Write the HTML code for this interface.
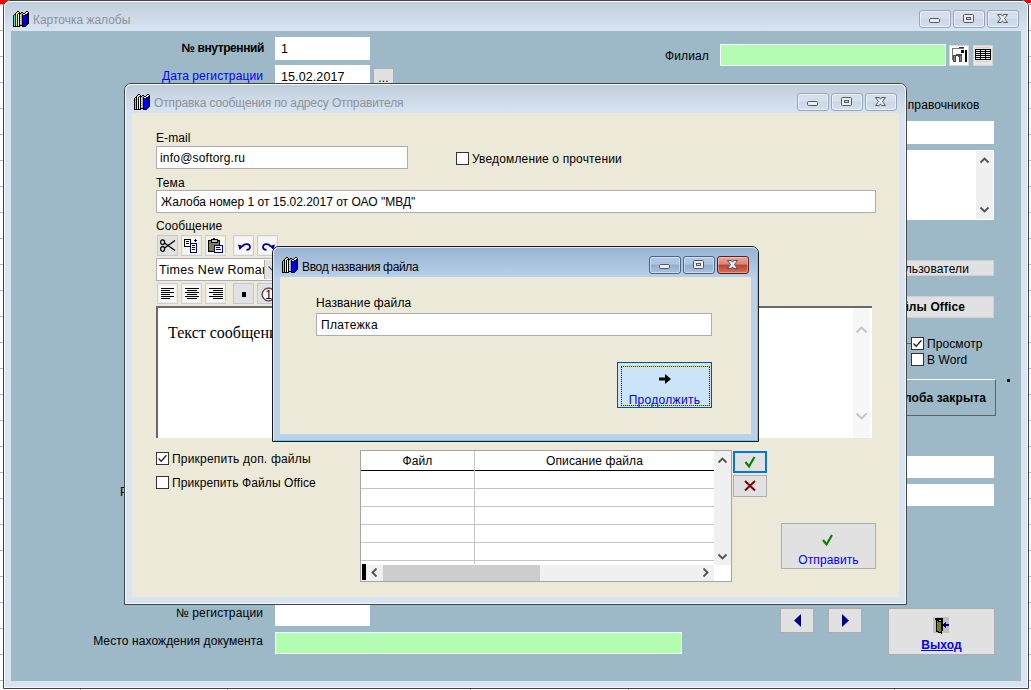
<!DOCTYPE html>
<html lang="ru">
<head>
<meta charset="utf-8">
<title>Карточка жалобы</title>
<style>
html,body{margin:0;padding:0;}
body{width:1031px;height:690px;overflow:hidden;position:relative;background:#fff;
 font-family:"Liberation Sans",sans-serif;font-size:12px;color:#000;line-height:14px;letter-spacing:0.1px;}
.a{position:absolute;box-sizing:border-box;white-space:nowrap;}
.win{position:absolute;box-sizing:border-box;border:1px solid #444;border-radius:7px 7px 0 0;}
.win.inact{background:#d8e4f1;}
.win.act{background:#b9d1ea;border-color:#1a1a1a;}
.win.act .hl{border-color:rgba(255,255,255,.55) #62ccf5 #62ccf5 rgba(255,255,255,.55);}
.win .hl{position:absolute;left:0;top:0;right:0;bottom:0;border:1px solid rgba(255,255,255,.75);border-radius:6px 6px 0 0;}
.tbar{position:absolute;left:1px;right:1px;top:1px;height:28px;border-radius:5px 5px 0 0;}
.inact .tbar{background:linear-gradient(#c0cedc,#d8e4f1);}
.act .tbar{background:linear-gradient(#98b3d2,#b9d1ea);}
.ttl{position:absolute;letter-spacing:-0.12px;font-size:12px;line-height:16px;white-space:nowrap;}
.inact .ttl{color:#8f9297;}
.act .ttl{color:#000;}
.cb{position:absolute;box-sizing:border-box;width:32px;height:18px;border:1px solid #98a6bb;border-radius:3px;
 background:linear-gradient(#d3deeb 0,#d6e1ee 45%,#c8d6e6 50%,#d3e0ee 100%);box-shadow:inset 0 0 0 1px rgba(255,255,255,.55);}
.act .cb{border-color:#4d6288;background:linear-gradient(#b3c9e3 0,#adc4df 45%,#92afd1 50%,#a9c2de 100%);box-shadow:inset 0 0 0 1px rgba(255,255,255,.45);}
.act .cb.x{border-color:#5b2019;background:linear-gradient(#e6a69c 0,#d98475 45%,#c1402b 50%,#d2735f 100%);box-shadow:inset 0 0 0 1px rgba(255,255,255,.35);}
.cb svg{position:absolute;left:-1px;top:-1px;}
.client{position:absolute;box-sizing:border-box;}
.lbl{position:absolute;white-space:nowrap;font-size:12px;line-height:14px;}
.r{text-align:right;}
.b{font-weight:bold;}
.blue{color:#0000ff;}
.inp{position:absolute;box-sizing:border-box;background:#fff;border:1px solid #fff;white-space:nowrap;overflow:hidden;}
.inp.g{background:#b3fdb3;border-color:#fbfffb;}
.inp.d{border-color:#abadb3;}
.btn{position:absolute;box-sizing:border-box;background:#e1e1e1;border:1px solid #adadad;text-align:center;white-space:nowrap;overflow:hidden;}
.chk{position:absolute;box-sizing:border-box;width:13px;height:13px;background:#fff;border:1px solid #333;}
.tb{position:absolute;box-sizing:border-box;width:21px;height:21px;background:#f6f6f6;border:1px solid #cfcfcf;box-shadow:inset 0 0 0 1px #ececec;}
.tb.gr{background:#e1e1e1;border-color:#c8c8c8;box-shadow:none;}
.tb svg{position:absolute;left:1px;top:1px;}
svg{display:block;}
</style>
</head>
<body>
<!-- desktop/sheet behind -->
<div class="a" id="bg" style="left:0;top:0;width:1031px;height:690px;background:#fff linear-gradient(to bottom,transparent 25px,#b4b4b4 25px) 0 5px/100% 26px;"></div>
<div class="a" style="left:0;top:0;width:8px;height:4px;background:#f00;"></div>
<div class="a" style="left:1024px;top:0;width:7px;height:3px;background:#f00;"></div>

<div class="a" style="left:80px;top:689px;width:1px;height:1px;background:#888;"></div><div class="a" style="left:227px;top:689px;width:1px;height:1px;background:#888;"></div><div class="a" style="left:470px;top:689px;width:1px;height:1px;background:#888;"></div><div class="a" style="left:628px;top:689px;width:1px;height:1px;background:#888;"></div><div class="a" style="left:894px;top:689px;width:1px;height:1px;background:#888;"></div>
<!-- MAIN WINDOW -->
<div class="win inact" id="w1" style="left:3px;top:0;width:1026px;height:689px;">
 <div class="tbar" style="height:29px;"></div><div class="hl"></div>
 <svg class="a" style="left:9px;top:10px;" width="16" height="16" viewBox="0 0 16 16" shape-rendering="crispEdges"><path d="M0 4v12h1v-12zM1 3v1h1v-1zM1 15v1h1v-1zM2 2v14h1v-14zM3 1v1h1v-1zM3 15v1h1v-1zM4 0v1h1v-1zM4 3v13h1v-13zM5 0v1h1v-1zM5 2v1h1v-1zM5 15v1h1v-1zM6 1v15h1v-15zM7 2v1h1v-1zM7 14v1h1v-1zM8 1v1h1v-1zM8 14v1h1v-1zM9 1v1h1v-1zM9 3v13h1v-13zM10 2v1h1v-1zM10 15v1h1v-1zM11 2v1h1v-1zM11 15v1h1v-1zM12 1v1h1v-1zM12 3v2h1v-2zM12 15v1h1v-1zM13 0v1h1v-1zM13 14v1h1v-1zM14 0v1h1v-1zM14 2v1h1v-1zM14 13v1h1v-1zM15 1v12h1v-12z" fill="#000"/><path d="M1 4v11h1v-11z" fill="#00ffff"/><path d="M3 2v13h1v-13zM4 1v2h1v-2zM5 1v1h1v-1z" fill="#ffff00"/><path d="M5 3v12h1v-12zM7 4v1h1v-1zM7 6v1h1v-1zM7 8v1h1v-1zM7 10v1h1v-1zM7 12v1h1v-1zM10 3v1h1v-1zM11 3v1h1v-1zM12 2v1h1v-1zM13 1v2h1v-2zM14 1v1h1v-1z" fill="#fff"/><path d="M7 3v1h1v-1zM7 5v1h1v-1zM7 7v1h1v-1zM7 9v1h1v-1zM7 11v1h1v-1zM7 13v1h1v-1zM8 2v12h1v-12zM9 2v1h1v-1z" fill="#a8a8a8"/><path d="M10 4v11h1v-11zM11 4v11h1v-11zM12 5v10h1v-10z" fill="#0000ff"/><path d="M13 3v11h1v-11zM14 3v10h1v-10z" fill="#0000a0"/></svg>
 <div class="ttl" style="left:29px;top:11px;letter-spacing:-0.02px;">Карточка жалобы</div>
 <div class="cb" style="left:915px;top:9px;"><svg width="32" height="18" viewBox="0 0 32 18"><rect x="10.5" y="8.5" width="10" height="4" rx="1.2" fill="#eeedec" stroke="#4f596a"/></svg></div>
 <div class="cb" style="left:949px;top:9px;"><svg width="32" height="18" viewBox="0 0 32 18"><rect x="10.5" y="4.500" width="10" height="8" rx="1.2" fill="#eeedec" stroke="#4f596a"/><rect x="13.500" y="7.500" width="4" height="2" fill="#c9d6e6" stroke="#4f596a"/></svg></div>
 <div class="cb x" style="left:983px;top:9px;"><svg width="32" height="18" viewBox="0 0 32 18"><path d="M10.500 4.500h3.900l1.100 1.700 1.100-1.700h3.900l-3 4 3 4h-3.900l-1.100-1.700-1.100 1.700h-3.900l3-4z" fill="#eeedec" stroke="#4f596a" stroke-width="1" stroke-linejoin="round"/></svg></div>
</div>
<div class="client" id="c1" style="left:11px;top:31px;width:1010px;height:650px;background:#9db8c6;"></div>


<!-- main window contents -->
<div id="m" class="a" style="left:0;top:0;width:1031px;height:690px;">
 <div class="lbl b r" style="left:100px;width:164px;top:41px;letter-spacing:-0.4px;">№ внутренний</div>
 <div class="inp" style="left:275px;top:37px;width:95px;height:23px;font-size:12.5px;line-height:23px;padding-left:5px;">1</div>
 <div class="lbl blue r" style="left:100px;width:163px;top:69px;letter-spacing:0.1px;">Дата регистрации</div>
 <div class="inp" style="left:275px;top:65px;width:95px;height:23px;font-size:12.5px;line-height:23px;padding-left:5px;">15.02.2017</div>
 <div class="btn" style="left:373px;top:68px;width:21px;height:22px;line-height:18px;">...</div>
 <div class="lbl" style="left:665px;top:49px;">Филиал</div>
 <div class="inp g" style="left:720px;top:44px;width:226px;height:22px;"></div>
 <div class="btn" style="left:949px;top:45px;width:20px;height:21px;background:#fff;border-color:#ddd6d6;">
  <svg width="18" height="19" viewBox="0 0 18 19" shape-rendering="crispEdges"><path d="M2 2h12v1H3v11H2z" fill="#777"/><path d="M9 1h5v1H9z" fill="#333"/><rect x="11" y="4" width="3" height="3" fill="#000"/><rect x="15" y="4" width="2" height="12" fill="#000"/><path d="M3 9h3v-1h6v8h-3v-5h-1v-1h-2v6H3z" fill="#4a4a4a"/><path d="M4 10h1v5H4zM10 10h1v5h-1z" fill="#8a8a8a"/></svg></div>
 <div class="btn" style="left:973px;top:45px;width:20px;height:21px;background:#e6e6e6;border-color:#d8d2d2;">
  <svg width="18" height="19" viewBox="0 0 18 19" shape-rendering="crispEdges"><rect x="1" y="3" width="16" height="11" fill="#000"/><path d="M2 4h4v1h-4zM7 4h4v1h-4zM12 4h4v1h-4zM2 6h4v1h-4zM7 6h4v1h-4zM12 6h4v1h-4zM2 8h4v1h-4zM7 8h4v1h-4zM12 8h4v1h-4zM2 10h4v1h-4zM7 10h4v1h-4zM12 10h4v1h-4zM2 12h4v1h-4zM7 12h4v1h-4zM12 12h4v1h-4z" fill="#f0f0f0"/><path d="M2 1h14v1H2zM2 15h14v1H2z" fill="#d4d4d4"/></svg></div>
 <div class="lbl" style="left:899px;top:98px;">Справочников</div>
 <div class="inp" style="left:860px;top:121px;width:134px;height:23px;"></div>
 <div class="inp" style="left:860px;top:150px;width:134px;height:70px;">
  <div class="a" style="right:0;top:0;width:17px;height:68px;background:#f0f0f0;">
   <svg width="17" height="68" viewBox="0 0 17 68"><path d="M4.500 11.500l4-4 4 4M4.500 56.500l4 4 4-4" fill="none" stroke="#505050" stroke-width="1.8"/></svg></div></div>
 <div class="btn" style="left:860px;top:260px;width:134px;height:16px;line-height:16px;text-align:right;padding-right:24px;border-color:#d0d0d0;">Пользователи</div>
 <div class="btn b" style="left:860px;top:296px;width:134px;height:22px;line-height:21px;text-align:right;padding-right:28px;border-color:#d0d0d0;">Файлы Office</div>
 <div class="a" style="left:905px;top:343px;width:6px;height:1px;background:#5a6a72;"></div>
 <div class="chk" style="left:911px;top:337px;"></div>
 <svg class="a" style="left:911px;top:337px;" width="13" height="13" viewBox="0 0 13 13"><path d="M2.5 6.5l2.7 2.8 5.2-6" fill="none" stroke="#222" stroke-width="1.3"/></svg>
 <div class="lbl" style="left:927px;top:337px;">Просмотр</div>
 <div class="chk" style="left:911px;top:353px;"></div>
 <div class="lbl" style="left:927px;top:353px;">В Word</div>
 <div class="a b" style="left:860px;top:379px;width:136px;height:37px;border:1px solid;border-color:#fff #5c6366 #5c6366 #fff;line-height:37px;text-align:right;padding-right:9px;">Жалоба закрыта</div>
 <div class="a" style="left:1007px;top:379px;width:3px;height:3px;background:#000;"></div>
 <div class="lbl" style="left:120px;top:485px;">Р</div>
 <div class="inp" style="left:860px;top:456px;width:134px;height:22px;"></div>
 <div class="inp" style="left:860px;top:484px;width:134px;height:22px;"></div>
 <div class="lbl r" style="left:100px;width:163px;top:606px;">№ регистрации</div>
 <div class="inp" style="left:275px;top:603px;width:95px;height:23px;"></div>
 <div class="lbl r" style="left:60px;width:203px;top:634px;">Место нахождения документа</div>
 <div class="inp g" style="left:275px;top:632px;width:407px;height:22px;"></div>
 <div class="btn" style="left:780px;top:608px;width:34px;height:25px;"><svg width="32" height="23" viewBox="0 0 32 23"><path d="M20 5v13l-7-6.5z" fill="#000080"/></svg></div>
 <div class="btn" style="left:828px;top:608px;width:34px;height:25px;"><svg width="32" height="23" viewBox="0 0 32 23"><path d="M13 5v13l7-6.5z" fill="#000080"/></svg></div>
 <div class="btn" style="left:888px;top:608px;width:107px;height:47px;">
  <svg class="a" style="left:44px;top:8px;" width="17" height="17" viewBox="0 0 17 17" shape-rendering="crispEdges"><rect x="0" y="0" width="16" height="16" fill="#c0c0c0"/><path d="M2 1h8v13H8V3H2z" fill="#000"/><path d="M3 3l5 2v11l-5-2z" fill="#808000"/><path d="M3 3l5 2v11l-5-2z" fill="none" stroke="#000" stroke-width="1"/><path d="M10 7h2V5l0 0h1v2h3v2h-3v2h-1V9h-2z" fill="#000080"/><path d="M9 8l3-3v6z" fill="#000080"/></svg>
  <div class="a b blue" style="left:0;right:0;top:29px;text-align:center;font-size:12px;text-decoration:underline;">Выход</div></div>
</div>

<!-- MIDDLE DIALOG -->
<div class="win inact" id="w2" style="left:124px;top:83px;width:783px;height:522px;">
 <div class="tbar"></div><div class="hl"></div>
 <svg class="a" style="left:9px;top:10px;" width="16" height="16" viewBox="0 0 16 16" shape-rendering="crispEdges"><path d="M0 4v12h1v-12zM1 3v1h1v-1zM1 15v1h1v-1zM2 2v14h1v-14zM3 1v1h1v-1zM3 15v1h1v-1zM4 0v1h1v-1zM4 3v13h1v-13zM5 0v1h1v-1zM5 2v1h1v-1zM5 15v1h1v-1zM6 1v15h1v-15zM7 2v1h1v-1zM7 14v1h1v-1zM8 1v1h1v-1zM8 14v1h1v-1zM9 1v1h1v-1zM9 3v13h1v-13zM10 2v1h1v-1zM10 15v1h1v-1zM11 2v1h1v-1zM11 15v1h1v-1zM12 1v1h1v-1zM12 3v2h1v-2zM12 15v1h1v-1zM13 0v1h1v-1zM13 14v1h1v-1zM14 0v1h1v-1zM14 2v1h1v-1zM14 13v1h1v-1zM15 1v12h1v-12z" fill="#000"/><path d="M1 4v11h1v-11z" fill="#00ffff"/><path d="M3 2v13h1v-13zM4 1v2h1v-2zM5 1v1h1v-1z" fill="#ffff00"/><path d="M5 3v12h1v-12zM7 4v1h1v-1zM7 6v1h1v-1zM7 8v1h1v-1zM7 10v1h1v-1zM7 12v1h1v-1zM10 3v1h1v-1zM11 3v1h1v-1zM12 2v1h1v-1zM13 1v2h1v-2zM14 1v1h1v-1z" fill="#fff"/><path d="M7 3v1h1v-1zM7 5v1h1v-1zM7 7v1h1v-1zM7 9v1h1v-1zM7 11v1h1v-1zM7 13v1h1v-1zM8 2v12h1v-12zM9 2v1h1v-1z" fill="#a8a8a8"/><path d="M10 4v11h1v-11zM11 4v11h1v-11zM12 5v10h1v-10z" fill="#0000ff"/><path d="M13 3v11h1v-11zM14 3v10h1v-10z" fill="#0000a0"/></svg>
 <div class="ttl" style="left:29px;top:11px;">Отправка сообщения по адресу Отправителя</div>
 <div class="cb" style="left:672px;top:9px;"><svg width="32" height="18" viewBox="0 0 32 18"><rect x="10.5" y="8.5" width="10" height="4" rx="1.2" fill="#eeedec" stroke="#4f596a"/></svg></div>
 <div class="cb" style="left:706px;top:9px;"><svg width="32" height="18" viewBox="0 0 32 18"><rect x="10.5" y="4.500" width="10" height="8" rx="1.2" fill="#eeedec" stroke="#4f596a"/><rect x="13.500" y="7.500" width="4" height="2" fill="#c9d6e6" stroke="#4f596a"/></svg></div>
 <div class="cb x" style="left:740px;top:9px;"><svg width="32" height="18" viewBox="0 0 32 18"><path d="M10.500 4.500h3.900l1.100 1.700 1.100-1.700h3.900l-3 4 3 4h-3.900l-1.100-1.700-1.100 1.700h-3.900l3-4z" fill="#eeedec" stroke="#4f596a" stroke-width="1" stroke-linejoin="round"/></svg></div>
</div>
<div class="client" id="c2" style="left:132px;top:113px;width:767px;height:484px;background:#ece9d8;"></div>


<!-- middle dialog contents -->
<div id="d" class="a" style="left:0;top:0;width:1031px;height:690px;">
 <div class="lbl" style="left:156px;top:131px;">E-mail</div>
 <div class="inp d" style="left:156px;top:146px;width:252px;height:23px;line-height:23px;padding-left:3px;letter-spacing:0.2px;">info@softorg.ru</div>
 <div class="chk" style="left:456px;top:152px;"></div>
 <div class="lbl" style="left:472px;top:152px;letter-spacing:0.15px;">Уведомление о прочтении</div>
 <div class="lbl" style="left:156px;top:176px;">Тема</div>
 <div class="inp d" style="left:156px;top:190px;width:720px;height:23px;line-height:23px;padding-left:4px;letter-spacing:0;">Жалоба номер 1 от 15.02.2017 от ОАО "МВД"</div>
 <div class="lbl" style="left:156px;top:219px;">Сообщение</div>
 <!-- toolbar row 1 -->
 <div class="tb gr" style="left:157px;top:235px;"><svg width="18" height="18" viewBox="0 0 18 18"><path d="M16 3.5L5.5 11M16 13.5L5.5 6" stroke="#000" stroke-width="1.3" fill="none"/><ellipse cx="3.6" cy="5.2" rx="2" ry="2.4" fill="none" stroke="#000" stroke-width="1.2"/><ellipse cx="3.6" cy="12" rx="2" ry="2.4" fill="none" stroke="#000" stroke-width="1.2"/></svg></div>
 <div class="tb" style="left:181px;top:235px;"><svg width="18" height="18" viewBox="0 0 18 18" shape-rendering="crispEdges"><path d="M1.5 2.5h6v7h-6z" fill="#fff" stroke="#000"/><path d="M3 4h3v1H3zM3 6h3v1H3z" fill="#000"/><path d="M7.500 6.500h6v9h-6z" fill="#fff" stroke="#000080"/><path d="M9 8h3v1H9zM9 10h3v1H9zM9 12h3v1H9z" fill="#000080"/><path d="M12 2h1v3h-1zM11 3h3v1h-3z" fill="#000"/></svg></div>
 <div class="tb" style="left:205px;top:235px;"><svg width="18" height="18" viewBox="0 0 18 18" shape-rendering="crispEdges"><path d="M1.500 3.500h11v11h-11z" fill="#808040" stroke="#000"/><path d="M4 2h6v3H4z" fill="#c0c0c0" stroke="#000"/><path d="M6 1h2v1H6z" fill="#000"/><path d="M7.500 8.500h8v7h-8z" fill="#fff" stroke="#000080"/><path d="M9 10h4v1H9zM9 12h5v1H9z" fill="#000080"/></svg></div>
 <div class="tb" style="left:233px;top:235px;"><svg width="18" height="18" viewBox="0 0 18 18"><path d="M7.500 9.500C9 6.300 15 6.300 15 10C15 12 13.500 12.800 11.500 12.800" fill="none" stroke="#000090" stroke-width="1.700"/><path d="M3 7.500l5.500 1.500-4 4z" fill="#000090"/></svg></div>
 <div class="tb" style="left:257px;top:235px;"><svg width="18" height="18" viewBox="0 0 18 18"><path d="M11.500 9.500C10 6.300 4 6.300 4 10C4 12 5.500 12.800 7.500 12.800" fill="none" stroke="#000090" stroke-width="1.700"/><path d="M16 7.500l-5.500 1.500 4 4z" fill="#000090"/></svg></div>
 <!-- font combo -->
 <div class="inp d" style="left:156px;top:258px;width:131px;height:23px;line-height:23px;padding-left:2px;font-size:12.5px;letter-spacing:0.3px;">Times New Roman</div>
 <div class="a" style="left:264px;top:260px;width:22px;height:19px;background:#e1e1e1;border-left:1px solid #adadad;"><svg width="20" height="19" viewBox="0 0 20 19"><path d="M3.500 6.500l4 4 4-4" fill="none" stroke="#555" stroke-width="1.1"/></svg></div>
 <!-- toolbar row 2 -->
 <div class="tb" style="left:157px;top:283px;"><svg width="18" height="18" viewBox="0 0 18 18" shape-rendering="crispEdges"><path d="M2 3h13v1H2zM2 5h9v1H2zM2 7h13v1H2zM2 9h9v1H2zM2 11h13v1H2zM2 13h9v1H2z" fill="#000"/></svg></div>
 <div class="tb" style="left:181px;top:283px;"><svg width="18" height="18" viewBox="0 0 18 18" shape-rendering="crispEdges"><path d="M2 3h14v1H2zM4 5h10v1H4zM2 7h14v1H2zM4 9h10v1H4zM2 11h14v1H2zM4 13h10v1H4z" fill="#000"/></svg></div>
 <div class="tb" style="left:205px;top:283px;"><svg width="18" height="18" viewBox="0 0 18 18" shape-rendering="crispEdges"><path d="M2 3h14v1H2zM6 5h10v1H6zM2 7h14v1H2zM6 9h10v1H6zM2 11h14v1H2zM6 13h10v1H6z" fill="#000"/></svg></div>
 <div class="tb gr" style="left:233px;top:283px;"><svg width="18" height="18" viewBox="0 0 18 18" shape-rendering="crispEdges"><rect x="7" y="7" width="4" height="5" fill="#000"/></svg></div>
 <div class="tb gr" style="left:257px;top:283px;"><svg width="18" height="18" viewBox="0 0 18 18"><circle cx="9.500" cy="9.500" r="6" fill="#fff" stroke="#b06000" stroke-width="1"/><circle cx="9.500" cy="9.500" r="6.600" fill="none" stroke="#000060" stroke-width=".7"/><text x="6.300" y="14" font-family="Liberation Sans,sans-serif" font-size="12" fill="#000">1</text></svg></div>
 <!-- message area -->
 <div class="a" style="left:156px;top:306px;width:716px;height:132px;background:#fff;border-top:2px solid #696969;border-left:2px solid #696969;"></div>
 <div class="a" style="left:168px;top:324px;font-family:'Liberation Serif',serif;font-size:16px;line-height:18px;letter-spacing:0;">Текст сообщения</div>
 <div class="a" style="left:853px;top:308px;width:17px;height:130px;background:#f7f7f7;"><svg width="17" height="130" viewBox="0 0 17 130"><path d="M3.500 24.500l5-5 5 5M3.500 105.500l5 5 5-5" fill="none" stroke="#c4c4c4" stroke-width="1.8"/></svg></div>
 <!-- attach -->
 <div class="chk" style="left:156px;top:452px;"></div>
 <svg class="a" style="left:156px;top:452px;" width="13" height="13" viewBox="0 0 13 13"><path d="M2.500 6.500l2.700 2.800 5.200-6" fill="none" stroke="#222" stroke-width="1.300"/></svg>
 <div class="lbl" style="left:172px;top:452px;letter-spacing:0.2px;">Прикрепить доп. файлы</div>
 <div class="chk" style="left:156px;top:476px;"></div>
 <div class="lbl" style="left:172px;top:476px;letter-spacing:0.1px;">Прикрепить Файлы Office</div>
 <!-- grid -->
 <div class="a" id="grid" style="left:360px;top:450px;width:372px;height:132px;background:#fff;border:1px solid #a3a3ab;">
  <div class="a" style="left:0;top:19px;width:353px;height:1px;background:#000;"></div>
  <div class="a" style="left:0;width:113px;top:3px;text-align:center;">Файл</div>
  <div class="a" style="left:114px;width:239px;top:3px;text-align:center;">Описание файла</div>
  <div class="a" style="left:113px;top:0;width:1px;height:113px;background:#c4c4c4;"></div>
  <div class="a" style="left:0;top:37px;width:353px;height:1px;background:#c4c4c4;"></div>
  <div class="a" style="left:0;top:55px;width:353px;height:1px;background:#c4c4c4;"></div>
  <div class="a" style="left:0;top:73px;width:353px;height:1px;background:#c4c4c4;"></div>
  <div class="a" style="left:0;top:91px;width:353px;height:1px;background:#c4c4c4;"></div>
  <div class="a" style="left:0;top:109px;width:353px;height:1px;background:#c4c4c4;"></div>
  <div class="a" style="left:353px;top:0;width:17px;height:114px;background:#f0f0f0;"><svg width="17" height="114" viewBox="0 0 17 114"><path d="M4.500 11.500l4-4 4 4M4.500 103.500l4 4 4-4" fill="none" stroke="#505050" stroke-width="1.800"/></svg></div>
  <div class="a" style="left:0;top:114px;width:353px;height:16px;background:#f0f0f0;"><svg width="353" height="17" viewBox="0 0 353 17" style="margin-top:-1px"><rect x="1" y="0" width="4" height="16" fill="#000"/><rect x="22" y="1" width="157" height="16" fill="#cdcdcd"/><path d="M15.500 4.500l-4 4 4 4M342.500 4.500l4 4-4 4" fill="none" stroke="#505050" stroke-width="1.800"/></svg></div>
 </div>
 <div class="btn" style="left:733px;top:451px;width:34px;height:22px;border:2px solid #0078d7;"><svg width="30" height="18" viewBox="0 0 30 18"><path d="M10.500 9l3.500 4.500 5.500-9.500" fill="none" stroke="#008000" stroke-width="2.100"/></svg></div>
 <div class="btn" style="left:733px;top:475px;width:34px;height:22px;"><svg width="32" height="20" viewBox="0 0 32 20"><path d="M11 5l10 9.500M21 5l-10 9.500" fill="none" stroke="#800000" stroke-width="2"/></svg></div>
 <div class="btn" style="left:781px;top:523px;width:95px;height:46px;">
  <svg class="a" style="left:38px;top:9px;" width="16" height="14" viewBox="0 0 16 14"><path d="M3 7l3.500 4.500 5.500-9.500" fill="none" stroke="#008000" stroke-width="2.100"/></svg>
  <div class="a blue" style="left:0;right:0;top:29px;text-align:center;">Отправить</div></div>
</div>

<!-- INNER DIALOG -->
<div class="win act" id="w3" style="left:272px;top:246px;width:487px;height:196px;">
 <div class="tbar" style="height:30px;"></div><div class="hl"></div>
 <svg class="a" style="left:9px;top:10px;" width="16" height="16" viewBox="0 0 16 16" shape-rendering="crispEdges"><path d="M0 4v12h1v-12zM1 3v1h1v-1zM1 15v1h1v-1zM2 2v14h1v-14zM3 1v1h1v-1zM3 15v1h1v-1zM4 0v1h1v-1zM4 3v13h1v-13zM5 0v1h1v-1zM5 2v1h1v-1zM5 15v1h1v-1zM6 1v15h1v-15zM7 2v1h1v-1zM7 14v1h1v-1zM8 1v1h1v-1zM8 14v1h1v-1zM9 1v1h1v-1zM9 3v13h1v-13zM10 2v1h1v-1zM10 15v1h1v-1zM11 2v1h1v-1zM11 15v1h1v-1zM12 1v1h1v-1zM12 3v2h1v-2zM12 15v1h1v-1zM13 0v1h1v-1zM13 14v1h1v-1zM14 0v1h1v-1zM14 2v1h1v-1zM14 13v1h1v-1zM15 1v12h1v-12z" fill="#000"/><path d="M1 4v11h1v-11z" fill="#00ffff"/><path d="M3 2v13h1v-13zM4 1v2h1v-2zM5 1v1h1v-1z" fill="#ffff00"/><path d="M5 3v12h1v-12zM7 4v1h1v-1zM7 6v1h1v-1zM7 8v1h1v-1zM7 10v1h1v-1zM7 12v1h1v-1zM10 3v1h1v-1zM11 3v1h1v-1zM12 2v1h1v-1zM13 1v2h1v-2zM14 1v1h1v-1z" fill="#fff"/><path d="M7 3v1h1v-1zM7 5v1h1v-1zM7 7v1h1v-1zM7 9v1h1v-1zM7 11v1h1v-1zM7 13v1h1v-1zM8 2v12h1v-12zM9 2v1h1v-1z" fill="#a8a8a8"/><path d="M10 4v11h1v-11zM11 4v11h1v-11zM12 5v10h1v-10z" fill="#0000ff"/><path d="M13 3v11h1v-11zM14 3v10h1v-10z" fill="#0000a0"/></svg>
 <div class="ttl" style="left:29px;top:12px;letter-spacing:-0.33px;">Ввод названия файла</div>
 <div class="cb" style="left:376px;top:9px;"><svg width="32" height="18" viewBox="0 0 32 18"><rect x="10.5" y="8.5" width="10" height="4" rx="1.2" fill="#eeedec" stroke="#4f596a"/></svg></div>
 <div class="cb" style="left:410px;top:9px;"><svg width="32" height="18" viewBox="0 0 32 18"><rect x="10.5" y="4.500" width="10" height="8" rx="1.2" fill="#eeedec" stroke="#4f596a"/><rect x="13.500" y="7.500" width="4" height="2" fill="#c9d6e6" stroke="#4f596a"/></svg></div>
 <div class="cb x" style="left:444px;top:9px;"><svg width="32" height="18" viewBox="0 0 32 18"><path d="M10.500 4.500h3.900l1.100 1.700 1.100-1.700h3.900l-3 4 3 4h-3.900l-1.100-1.700-1.100 1.700h-3.900l3-4z" fill="#eeedec" stroke="#4f596a" stroke-width="1" stroke-linejoin="round"/></svg></div>
</div>
<div class="client" id="c3" style="left:280px;top:277px;width:471px;height:157px;background:#ece9d8;"></div>

<!-- inner dialog contents -->
<div id="e" class="a" style="left:0;top:0;width:1031px;height:690px;">
 <div class="lbl" style="left:316px;top:296px;">Название файла</div>
 <div class="inp d" style="left:316px;top:313px;width:396px;height:23px;line-height:23px;padding-left:4px;letter-spacing:0.35px;">Платежка</div>
 <div class="btn" style="left:617px;top:362px;width:95px;height:46px;background:#cce4f7;border-color:#005499;">
  <div class="a" style="left:3px;top:3px;right:1px;bottom:1px;border:1px solid #e6dc00;"></div><div class="a" style="left:3px;top:3px;right:1px;bottom:1px;border:1px dotted #2a2400;"></div>
  <svg class="a" style="left:40px;top:10px;" width="14" height="12" viewBox="0 0 14 12"><path d="M1 4.500h6V1l6 5-6 5V7.500H1z" fill="#000"/></svg>
  <div class="a blue" style="left:0;right:0;top:30px;text-align:center;letter-spacing:0.3px;">Продолжить</div></div>
</div>
</body>
</html>
